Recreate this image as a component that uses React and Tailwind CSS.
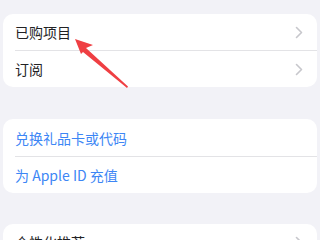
import React from "react";

function Chevron() {
  return (
    <svg width="8" height="13" viewBox="0 0 8 13" fill="none" stroke="#c7c7cc" strokeWidth="1.6" strokeLinecap="round" strokeLinejoin="round">
      <polyline points="1.5 1.5 6.5 6.5 1.5 11.5" />
    </svg>
  );
}

export default function App() {
  return (
    <div
      className="relative w-[320px] h-[240px] overflow-hidden bg-[#f2f2f7] pt-[14px] px-[3px]"
      style={{ fontFamily: '"Noto Sans CJK SC", "Noto Sans", sans-serif' }}
    >
      <div className="bg-white rounded-[10px] overflow-hidden">
        <div className="flex items-center h-[36px] pl-[12px] pr-[14px]">
          <span className="flex-1 text-[14px] leading-none text-[#222224]">已购项目</span>
          <Chevron />
        </div>
        <div className="ml-[12px] border-t border-[#e3e3e6]" />
        <div className="flex items-center h-[36px] pl-[12px] pr-[14px]">
          <span className="flex-1 text-[14px] leading-none text-[#222224]">订阅</span>
          <Chevron />
        </div>
      </div>

      <div className="mt-[32px] bg-white rounded-[10px] overflow-hidden">
        <div className="flex items-center h-[37px] pl-[12px]">
          <span className="text-[14px] leading-none text-[#3d86f5]">兑换礼品卡或代码</span>
        </div>
        <div className="ml-[12px] border-t border-[#e3e3e6]" />
        <div className="flex items-center h-[36px] pl-[12px]">
          <span className="text-[14px] leading-none text-[#3d86f5]">为 Apple ID 充值</span>
        </div>
      </div>

      <div className="mt-[31px] bg-white rounded-[10px] overflow-hidden">
        <div className="flex items-center h-[36px] pl-[12px] pr-[14px]">
          <span className="flex-1 text-[14px] leading-none text-[#222224]">个性化推荐</span>
          <Chevron />
        </div>
      </div>

      <svg className="absolute left-0 top-0" width="320" height="240" viewBox="0 0 320 240">
        <polygon points="75,39 93,45 86,48 128,86.5 127,88 83,52 81,54" fill="#ef3f43" />
      </svg>
    </div>
  );
}
